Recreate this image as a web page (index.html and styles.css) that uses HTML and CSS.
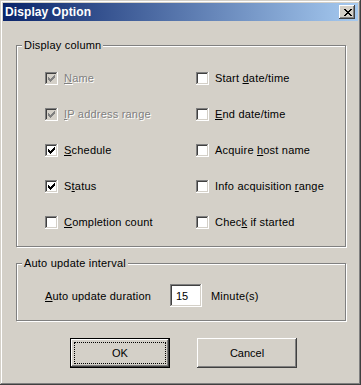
FILE: index.html
```html
<!DOCTYPE html>
<html lang="en">
<head>
    <meta charset="UTF-8">
    <title>Display Option</title>
    <link rel="stylesheet" href="styles.css">
</head>
<body>
    <div class="window">
        <div class="titlebar">
            <span class="title">Display Option</span>
            <button class="close" type="button">
                <svg width="8" height="7" viewBox="0 0 8 7" shape-rendering="crispEdges">
                    <path d="M0 0h2v1h-2zM6 0h2v1h-2zM1 1h2v1h-2zM5 1h2v1h-2zM2 2h4v1h-4zM3 3h2v1h-2zM2 4h4v1h-4zM1 5h2v1h-2zM5 5h2v1h-2zM0 6h2v1h-2zM6 6h2v1h-2z" fill="#000"/>
                </svg>
            </button>
        </div>

        <div class="dialog">
            <div class="group group-columns">
                <span class="group-title">Display column</span>
                <div class="columns">
                    <label class="check disabled"><span class="box on"><svg width="7" height="7" viewBox="0 0 7 7" shape-rendering="crispEdges"><path d="M6 0h1v1h-1zM5 1h2v1h-2zM0 2h1v1h-1zM4 2h3v1h-3zM0 3h2v1h-2zM3 3h3v1h-3zM0 4h5v1h-5zM1 5h3v1h-3zM2 6h1v1h-1z"/></svg></span><span class="text"><u>N</u>ame</span></label>
                    <label class="check"><span class="box"></span><span class="text">Start <u>d</u>ate/time</span></label>

                    <label class="check disabled"><span class="box on"><svg width="7" height="7" viewBox="0 0 7 7" shape-rendering="crispEdges"><path d="M6 0h1v1h-1zM5 1h2v1h-2zM0 2h1v1h-1zM4 2h3v1h-3zM0 3h2v1h-2zM3 3h3v1h-3zM0 4h5v1h-5zM1 5h3v1h-3zM2 6h1v1h-1z"/></svg></span><span class="text"><u>I</u>P address range</span></label>
                    <label class="check"><span class="box"></span><span class="text"><u>E</u>nd date/time</span></label>

                    <label class="check"><span class="box on"><svg width="7" height="7" viewBox="0 0 7 7" shape-rendering="crispEdges"><path d="M6 0h1v1h-1zM5 1h2v1h-2zM0 2h1v1h-1zM4 2h3v1h-3zM0 3h2v1h-2zM3 3h3v1h-3zM0 4h5v1h-5zM1 5h3v1h-3zM2 6h1v1h-1z"/></svg></span><span class="text"><u>S</u>chedule</span></label>
                    <label class="check"><span class="box"></span><span class="text">Acquire <u>h</u>ost name</span></label>

                    <label class="check"><span class="box on"><svg width="7" height="7" viewBox="0 0 7 7" shape-rendering="crispEdges"><path d="M6 0h1v1h-1zM5 1h2v1h-2zM0 2h1v1h-1zM4 2h3v1h-3zM0 3h2v1h-2zM3 3h3v1h-3zM0 4h5v1h-5zM1 5h3v1h-3zM2 6h1v1h-1z"/></svg></span><span class="text">S<u>t</u>atus</span></label>
                    <label class="check"><span class="box"></span><span class="text">Info acquisition <u>r</u>ange</span></label>

                    <label class="check"><span class="box"></span><span class="text"><u>C</u>ompletion count</span></label>
                    <label class="check"><span class="box"></span><span class="text">Chec<u>k</u> if started</span></label>
                </div>
            </div>

            <div class="group group-interval">
                <span class="group-title">Auto update interval</span>
                <div class="interval">
                    <span class="interval-label"><u>A</u>uto update duration</span>
                    <input class="edit" type="text" value="15">
                    <span class="unit">Minute(s)</span>
                </div>
            </div>

            <div class="buttons">
                <button class="btn default" type="button"><span class="focus">OK</span></button>
                <button class="btn" type="button">Cancel</button>
            </div>
        </div>
    </div>
</body>
</html>
```

FILE: styles.css
```css
body {
    margin: 0;
    background: #d4d0c8;
    font-family: "Liberation Sans", Arial, sans-serif;
    font-size: 11px;
    letter-spacing: 0.2px;
    color: #000;
}
u {
    text-decoration: underline;
    text-underline-offset: 1px;
}
.window {
    width: 361px;
    height: 385px;
    box-sizing: border-box;
    padding: 3px;
    background: #d4d0c8;
    box-shadow: inset -1px -1px #404040, inset 1px 1px #d4d0c8,
                inset -2px -2px #808080, inset 2px 2px #fff;
}
.titlebar {
    height: 18px;
    display: flex;
    align-items: center;
    padding: 0 3px 0 2px;
    background: linear-gradient(to right, #0a246a, #a6caf0);
}
.title {
    flex: 1;
    color: #fff;
    font-weight: bold;
    font-size: 12px;
    letter-spacing: 0.1px;
    line-height: 18px;
}
.close {
    width: 16px;
    height: 14px;
    padding: 0;
    border: none;
    display: flex;
    align-items: center;
    justify-content: center;
    background: #d4d0c8;
    box-shadow: inset -1px -1px #404040, inset 1px 1px #fff,
                inset -2px -2px #808080, inset 2px 2px #d4d0c8;
}
.close svg {
    margin-left: 1px;
}

.dialog {
    padding-top: 24px;
}
.group {
    position: relative;
    width: 330px;
    box-sizing: border-box;
    margin-left: 13px;
    border: 1px solid #808080;
    box-shadow: 1px 1px 0 #fff, inset 1px 1px 0 #fff;
}
.group-title {
    position: absolute;
    top: -7px;
    left: 5px;
    padding: 0 2px;
    line-height: 13px;
    background: #d4d0c8;
}
.group-columns {
    padding: 26px 0 17px 28px;
}
.columns {
    display: grid;
    grid-template-columns: 151px 1fr;
    row-gap: 23px;
}
.check {
    display: flex;
    align-items: center;
    gap: 6px;
    height: 13px;
    line-height: 13px;
    white-space: nowrap;
}
.box {
    width: 13px;
    height: 13px;
    box-sizing: border-box;
    display: flex;
    align-items: center;
    justify-content: center;
    background: #fff;
    box-shadow: inset -1px -1px #fff, inset 1px 1px #808080,
                inset -2px -2px #d4d0c8, inset 2px 2px #404040;
}
.box svg {
    fill: #000;
}
.disabled .box {
    background: #d4d0c8;
}
.disabled .box svg {
    fill: #808080;
}
.disabled .text {
    color: #808080;
    text-shadow: 1px 1px 0 #fff;
}

.group-interval {
    margin-top: 16px;
    padding: 20px 0 13px 28px;
}
.interval {
    display: flex;
    align-items: center;
    height: 23px;
}
.interval-label {
    width: 125px;
}
.edit {
    width: 32px;
    height: 23px;
    box-sizing: border-box;
    margin: 0;
    padding: 0 0 0 6px;
    border: none;
    outline: none;
    font: inherit;
    color: #000;
    background: #fff;
    box-shadow: inset -1px -1px #fff, inset 1px 1px #808080,
                inset -2px -2px #d4d0c8, inset 2px 2px #404040;
}
.unit {
    margin-left: 9px;
}

.buttons {
    display: flex;
    margin-top: 17px;
    padding-left: 67px;
    gap: 27px;
}
.btn {
    width: 100px;
    height: 30px;
    padding: 0;
    border: none;
    font: inherit;
    color: #000;
    background: #d4d0c8;
    box-shadow: inset -1px -1px #404040, inset 1px 1px #fff,
                inset -2px -2px #808080, inset 2px 2px #d4d0c8;
}
.btn.default {
    border: 1px solid #000;
    display: flex;
    padding: 3px;
}
.focus {
    flex: 1;
    display: flex;
    align-items: center;
    justify-content: center;
    border: 1px dotted #000;
}
```
